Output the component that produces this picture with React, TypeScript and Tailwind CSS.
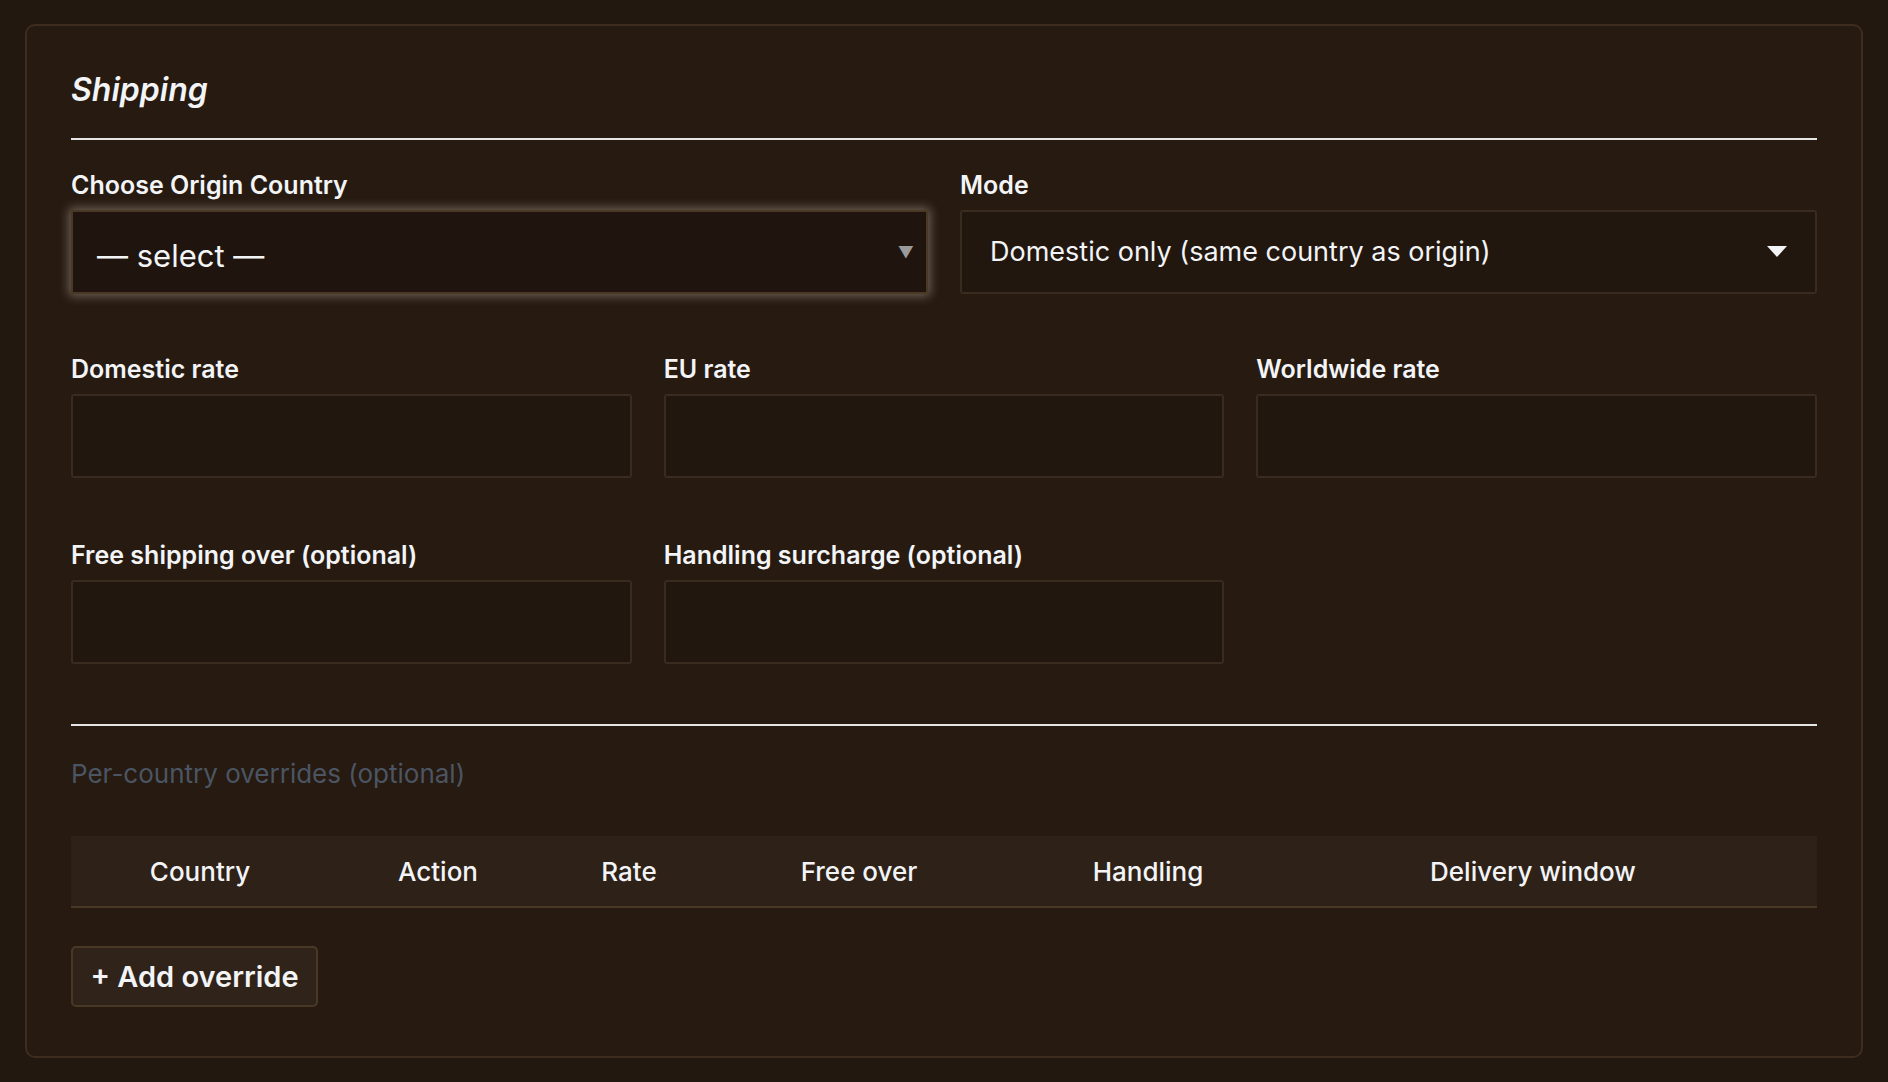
export default function App() {
  const font = { fontFamily: "Inter, 'Noto Sans', sans-serif" };
  const Field = ({ label }: { label: string }) => (
    <div className="flex flex-col">
      <label className="text-[25px] font-semibold text-[#f3f4f6] leading-[30px] mb-[10px]">{label}</label>
      <div className="h-[84px] bg-[#21170f] border-2 border-[#3a2b1f] rounded-[3px]" />
    </div>
  );
  return (
    <div style={font} className="w-[1888px] h-[1082px] bg-[#231810] pt-[24px] px-[25px]">
      <div className="h-[1034px] rounded-[10px] border-2 border-[#3e2d1e] bg-[#261a11] px-[44px] pt-[44px]">
        <h2 className="text-[32px] italic font-semibold text-[#f3f4f6] leading-[40px]">Shipping</h2>
        <div className="h-[2px] bg-[#e5e5e5] mt-[28px] mb-[30px]" />
        <div className="grid grid-cols-2 gap-x-[32px]">
          <div className="flex flex-col">
            <label className="text-[25px] font-semibold text-[#f3f4f6] leading-[30px] mb-[10px]">Choose Origin Country</label>
            <div className="h-[84px] bg-[#1f150e] border-2 border-[#4a3826] shadow-[0_0_10px_2px_rgba(255,240,220,0.35)] flex items-center justify-between pl-[24px] pr-[12px]">
              <span className="text-[31px] text-[#f3f4f6] mt-[8px]">— select —</span>
              <span className="text-[16px] text-[#9a9a9a]">▼</span>
            </div>
          </div>
          <div className="flex flex-col">
            <label className="text-[25px] font-semibold text-[#f3f4f6] leading-[30px] mb-[10px]">Mode</label>
            <div className="h-[84px] bg-[#21170f] border-2 border-[#3a2b1f] rounded-[3px] flex items-center justify-between pl-[28px] pr-[28px]">
              <span className="text-[27px] text-[#f3f4f6]">Domestic only (same country as origin)</span>
              <svg width="20" height="12" viewBox="0 0 20 12"><path d="M0 0h20L10 11z" fill="#f3f4f6" /></svg>
            </div>
          </div>
        </div>
        <div className="grid grid-cols-3 gap-x-[32px] mt-[60px]">
          <Field label="Domestic rate" />
          <Field label="EU rate" />
          <Field label="Worldwide rate" />
        </div>
        <div className="grid grid-cols-3 gap-x-[32px] mt-[62px]">
          <Field label="Free shipping over (optional)" />
          <Field label="Handling surcharge (optional)" />
        </div>
        <div className="h-[2px] bg-[#e5e5e5] mt-[60px]" />
        <div className="text-[26px] text-[#4b5563] mt-[32px] leading-[32px]">Per-country overrides (optional)</div>
        <table className="w-full mt-[46px] border-collapse">
          <thead>
            <tr className="bg-[#2e2118] border-b-2 border-[#4a3826] h-[71px] text-[26px] font-medium text-[#f3f4f6]">
              <th className="w-[258px] font-medium">Country</th>
              <th className="w-[218px] font-medium">Action</th>
              <th className="w-[164px] font-medium">Rate</th>
              <th className="w-[296px] font-medium">Free over</th>
              <th className="w-[282px] font-medium">Handling</th>
              <th className="font-medium pr-[40px]">Delivery window</th>
            </tr>
          </thead>
        </table>
        <button className="mt-[38px] h-[61px] w-[247px] rounded-[5px] border-2 border-[#4a3826] bg-[#30231a] text-[29px] font-semibold text-[#f3f4f6]">+ Add override</button>
      </div>
    </div>
  );
}
